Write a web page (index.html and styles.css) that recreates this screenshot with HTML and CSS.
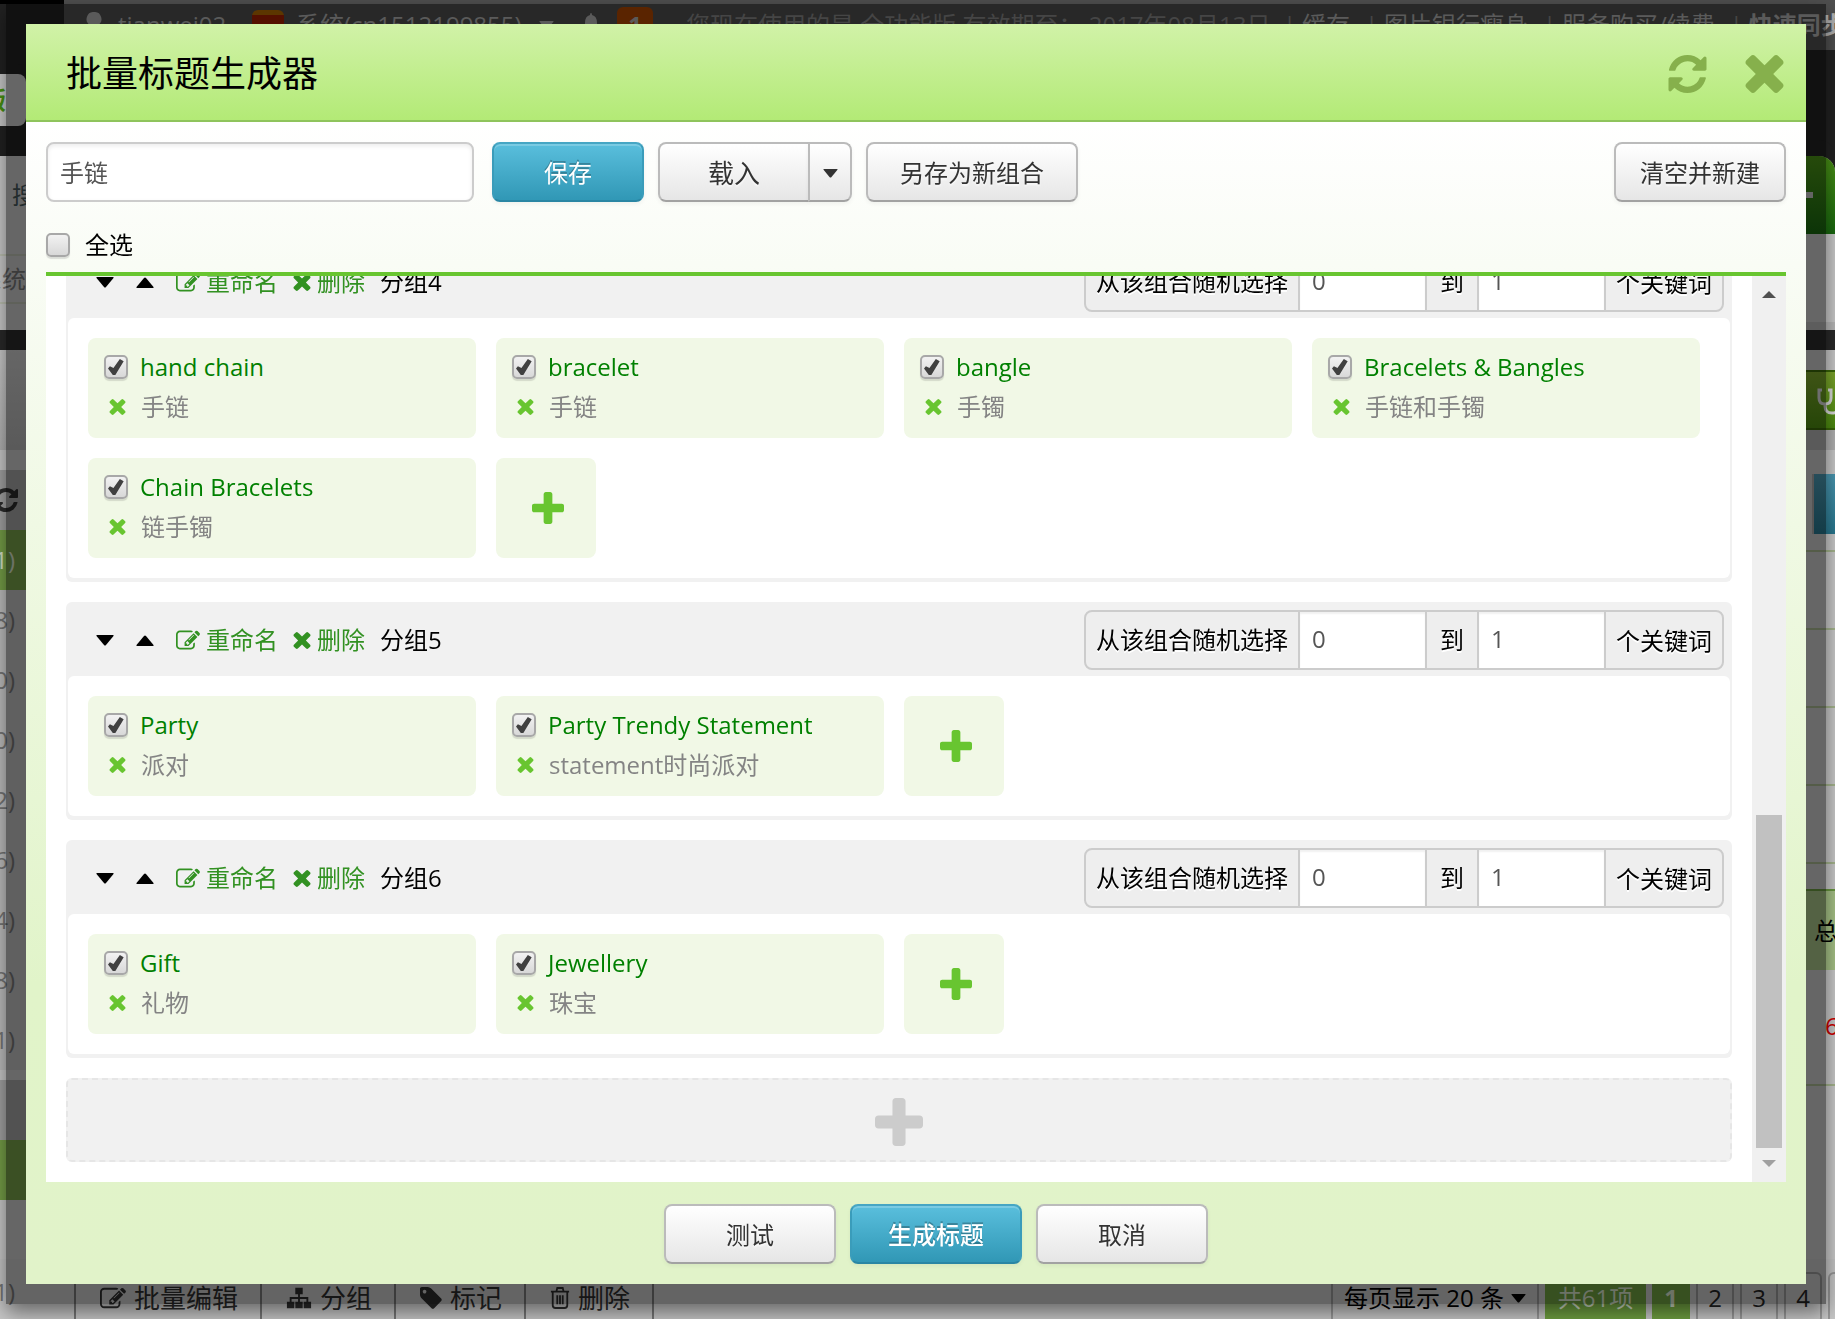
FILE: index.html
```html
<!DOCTYPE html>
<html lang="zh-CN">
<head>
<meta charset="utf-8">
<title>批量标题生成器</title>
<link rel="stylesheet" href="styles.css">
</head>
<body>
<svg class="sprite" aria-hidden="true">
  <symbol id="times" viewBox="110 238 1188 1188"><path transform="translate(0 1408) scale(1 -1)" d="M1298 214q0 -40 -28 -68l-136 -136q-28 -28 -68 -28t-68 28l-294 294l-294 -294q-28 -28 -68 -28t-68 28l-136 136q-28 28 -28 68t28 68l294 294l-294 294q-28 28 -28 68t28 68l136 136q28 28 68 28t68 -28l294 -294l294 294q28 28 68 28t68 -28l136 -136q28 -28 28 -68t-28 -68l-294 -294l294 -294q28 -28 28 -68z"/></symbol>
  <symbol id="refresh" viewBox="0 0 1536 1536"><path transform="translate(0 1408) scale(1 -1)" d="M1511 480q0 -5 -1 -7q-64 -268 -268 -434.500t-478 -166.500q-146 0 -282.500 55t-243.500 157l-129 -129q-19 -19 -45 -19t-45 19t-19 45v448q0 26 19 45t45 19h448q26 0 45 -19t19 -45t-19 -45l-137 -137q71 -66 161 -102t187 -36q134 0 250 65t186 179q11 17 53 117q8 23 30 23h192q13 0 22.500 -9.500t9.500 -22.500zM1536 1280v-448q0 -26 -19 -45t-45 -19h-448q-26 0 -45 19t-19 45t19 45l138 138q-148 137 -349 137q-134 0 -250 -65t-186 -179q-11 -17 -53 -117q-8 -23 -30 -23h-199q-13 0 -22.500 9.500t-9.500 22.500v7q65 268 270 434.500t480 166.500q146 0 284 -55.500t245 -156.500l130 129q19 19 45 19t45 -19t19 -45z"/></symbol>
  <symbol id="plus" viewBox="0 0 1408 1408"><path transform="translate(0 1408) scale(1 -1)" d="M1408 800v-192q0 -40 -28 -68t-68 -28h-416v-416q0 -40 -28 -68t-68 -28h-192q-40 0 -68 28t-28 68v416h-416q-40 0 -68 28t-28 68v192q0 40 28 68t68 28h416v416q0 40 28 68t68 28h192q40 0 68 -28t28 -68v-416h416q40 0 68 -28t28 -68z"/></symbol>
  <symbol id="edit" viewBox="0 0 1792 1408"><path transform="translate(0 1408) scale(1 -1)" d="M888 352l116 116l-152 152l-116 -116v-56h96v-96h56zM1328 1072q-16 16 -33 -1l-350 -350q-17 -17 -1 -33t33 1l350 350q17 17 1 33zM1408 478v-190q0 -119 -84.500 -203.500t-203.500 -84.500h-832q-119 0 -203.500 84.500t-84.500 203.500v832q0 119 84.500 203.500t203.500 84.500h832q63 0 117 -25q15 -7 18 -23q3 -17 -9 -29l-49 -49q-14 -14 -32 -8q-23 6 -45 6h-832q-66 0 -113 -47t-47 -113v-832q0 -66 47 -113t113 -47h832q66 0 113 47t47 113v126q0 13 9 22l64 64q15 15 35 7t20 -29zM1312 1216l288 -288l-672 -672h-288v288zM1756 1084l-92 -92l-288 288l92 92q28 28 68 28t68 -28l152 -152q28 -28 28 -68t-28 -68z"/></symbol>
  <symbol id="tag" viewBox="0 0 1536 1536"><path transform="translate(0 1408) scale(1 -1)" d="M448 1088q0 53 -37.500 90.500t-90.500 37.500t-90.500 -37.500t-37.500 -90.500t37.500 -90.500t90.500 -37.500t90.500 37.500t37.500 90.500zM1515 512q0 -53 -37 -90l-491 -492q-39 -37 -91 -37q-53 0 -90 37l-715 716q-38 37 -64.500 101t-26.500 117v416q0 52 38 90t90 38h416q53 0 117 -26.500t102 -64.500l715 -714q37 -39 37 -91z"/></symbol>
  <symbol id="sitemap" viewBox="0 0 28 24"><path d="M10 1h8v7h-3v3h9v5h3v7h-8v-7h3v-3h-7v3h3v7h-8v-7h3v-3H6v3h3v7H1v-7h3v-5h9V8h-3z"/></symbol>
  <symbol id="trash" viewBox="0 0 22 24"><path fill="none" stroke="currentColor" stroke-width="2" d="M1 5h20M7 5l1-4h6l1 4M3 5v15q0 3 3 3h10q3 0 3-3V5M8 9v10M11 9v10M14 9v10"/></symbol>
  <symbol id="down" viewBox="0 0 18 11"><path d="M1 0h16q1 0 .5 1L10 10q-1 1-2 0L.5 1Q0 0 1 0z"/></symbol>
  <symbol id="up" viewBox="0 0 18 11"><path d="M1 11h16q1 0 .5-1L10 1Q9 0 8 1L.5 10q-.5 1 .5 1z"/></symbol>
  <symbol id="user" viewBox="0 0 18 26"><path d="M9 0a7 7 0 0 1 4 13l1 3q4 1 4 5v3H0v-3q0-4 4-5l1-3A7 7 0 0 1 9 0z"/></symbol>
  <symbol id="bell" viewBox="0 0 18 24"><path d="M9 0q1 0 1 2 5 1 5 8 0 7 3 9H0q3-2 3-9 0-7 5-8 0-2 1-2zM7 20h4q0 3-2 3t-2-3z"/></symbol>
  <symbol id="steth" viewBox="0 0 30 30"><path fill="none" stroke="currentColor" stroke-width="3" d="M6 4H3v8q0 6 6 6t6-6V4h-3M9 18v2q0 7 7 7t7-7v-7"/></symbol>
</svg>

<div class="page">
  <header class="topbar">
    <div class="topbar-brand"></div>
    <nav class="topbar-nav">
      <svg class="ico-user"><use href="#user"/></svg>
      <span class="nav-user">tianwei02</span>
      <span class="shop-logo"></span>
      <span class="nav-shop">系统(cn1512199855)</span>
      <svg class="ico-caret nav-caret"><use href="#down"/></svg>
      <svg class="ico-bell"><use href="#bell"/></svg>
      <b class="nav-badge">1</b>
      <span class="nav-notice">您现在使用的是 全功能版 有效期至： 2017年08月13日</span>
      <span class="nav-links"><i>|</i><a href="#">缓存</a><i>|</i><a href="#">图片银行瘦身</a><i>|</i><a href="#">服务购买/续费</a><i>|</i><b>快速同步</b></span>
    </nav>
  </header>
  <div class="middle">
    <aside class="left">
      <div class="l-dark-a"></div>
      <div class="l-tab">版</div>
      <div class="l-dark-b"></div>
      <div class="l-search">搜</div>
      <div class="l-system">系统</div>
      <div class="l-gap"></div>
      <div class="l-dark-c"></div>
      <div class="l-panel"></div>
      <div class="l-refresh"><svg><use href="#refresh"/></svg></div>
      <div class="l-row on">1)</div>
      <div class="l-row">8)</div>
      <div class="l-row">0)</div>
      <div class="l-row">0)</div>
      <div class="l-row">2)</div>
      <div class="l-row">6)</div>
      <div class="l-row">4)</div>
      <div class="l-row">8)</div>
      <div class="l-row">1)</div>
      <div class="l-row head"></div>
      <div class="l-row on"></div>
    </aside>
    <aside class="right">
      <div class="r-dark"></div>
      <div class="r-green"><span></span></div>
      <div class="r-space"></div>
      <div class="r-band"></div>
      <div class="r-check"><svg><use href="#steth"/></svg></div>
      <div class="r-strip"></div>
      <div class="r-blue"></div>
      <div class="r-rule"></div>
      <div class="r-line"></div>
      <div class="r-line"></div>
      <div class="r-line"></div>
      <div class="r-line"></div>
      <div class="r-total">总</div>
      <div class="r-count">6</div>
    </aside>
  </div>
  <footer class="bottombar">
    <span class="left-count">1)</span>
    <div class="tools">
      <a href="#"><svg class="w26"><use href="#edit"/></svg>批量编辑</a>
      <a href="#"><svg class="w26"><use href="#sitemap"/></svg>分组</a>
      <a href="#"><svg class="w22"><use href="#tag"/></svg>标记</a>
      <a href="#"><svg class="w20"><use href="#trash"/></svg>删除</a>
    </div>
    <div class="pager">
      <button class="pg size">每页显示 20 条<svg class="ico-caret"><use href="#down"/></svg></button>
      <span class="pg total">共61项</span>
      <button class="pg current">1</button>
      <button class="pg">2</button>
      <button class="pg">3</button>
      <button class="pg">4</button>
      <button class="pg" aria-label="下一页"></button>
    </div>
  </footer>
</div>

<section class="modal" role="dialog" aria-labelledby="title">
  <header class="modal-head">
    <h1 id="title">批量标题生成器</h1>
    <button class="icon-btn" aria-label="刷新"><svg><use href="#refresh"/></svg></button>
    <button class="icon-btn" aria-label="关闭"><svg><use href="#times"/></svg></button>
  </header>
  <div class="modal-body">
    <div class="toolbar">
      <input class="name" type="text" value="手链" aria-label="组合名称">
      <button class="btn primary save">保存</button>
      <div class="split">
        <button class="btn load">载入</button><button class="btn drop" aria-label="更多"><svg class="ico-caret"><use href="#down"/></svg></button>
      </div>
      <button class="btn saveas">另存为新组合</button>
      <button class="btn wide clear">清空并新建</button>
    </div>
    <div class="select-all"><label><input class="tick" type="checkbox">全选</label></div>
    <div class="scroller">
      <div class="list">
        <section class="group">
          <header class="group-head">
            <button class="move" aria-label="下移"><svg><use href="#down"/></svg></button>
            <button class="move" aria-label="上移"><svg><use href="#up"/></svg></button>
            <a class="rename" href="#"><svg><use href="#edit"/></svg>重命名</a>
            <a class="remove" href="#"><svg><use href="#times"/></svg>删除</a>
            <span>分组4</span>
            <div class="range"><label for="a4">从该组合随机选择</label><input id="a4" type="text" value="0"><label for="b4">到</label><input id="b4" type="text" value="1"><span>个关键词</span></div>
          </header>
          <div class="cards">
            <div class="card"><label><input class="tick" type="checkbox" checked>hand chain</label><p><button aria-label="删除"><svg><use href="#times"/></svg></button>手链</p></div>
            <div class="card"><label><input class="tick" type="checkbox" checked>bracelet</label><p><button aria-label="删除"><svg><use href="#times"/></svg></button>手链</p></div>
            <div class="card"><label><input class="tick" type="checkbox" checked>bangle</label><p><button aria-label="删除"><svg><use href="#times"/></svg></button>手镯</p></div>
            <div class="card"><label><input class="tick" type="checkbox" checked>Bracelets &amp; Bangles</label><p><button aria-label="删除"><svg><use href="#times"/></svg></button>手链和手镯</p></div>
            <div class="card"><label><input class="tick" type="checkbox" checked>Chain Bracelets</label><p><button aria-label="删除"><svg><use href="#times"/></svg></button>链手镯</p></div>
            <button class="add" aria-label="添加"><svg><use href="#plus"/></svg></button>
          </div>
        </section>
        <section class="group">
          <header class="group-head">
            <button class="move" aria-label="下移"><svg><use href="#down"/></svg></button>
            <button class="move" aria-label="上移"><svg><use href="#up"/></svg></button>
            <a class="rename" href="#"><svg><use href="#edit"/></svg>重命名</a>
            <a class="remove" href="#"><svg><use href="#times"/></svg>删除</a>
            <span>分组5</span>
            <div class="range"><label for="a5">从该组合随机选择</label><input id="a5" type="text" value="0"><label for="b5">到</label><input id="b5" type="text" value="1"><span>个关键词</span></div>
          </header>
          <div class="cards">
            <div class="card"><label><input class="tick" type="checkbox" checked>Party</label><p><button aria-label="删除"><svg><use href="#times"/></svg></button>派对</p></div>
            <div class="card"><label><input class="tick" type="checkbox" checked>Party Trendy Statement</label><p><button aria-label="删除"><svg><use href="#times"/></svg></button>statement时尚派对</p></div>
            <button class="add" aria-label="添加"><svg><use href="#plus"/></svg></button>
          </div>
        </section>
        <section class="group">
          <header class="group-head">
            <button class="move" aria-label="下移"><svg><use href="#down"/></svg></button>
            <button class="move" aria-label="上移"><svg><use href="#up"/></svg></button>
            <a class="rename" href="#"><svg><use href="#edit"/></svg>重命名</a>
            <a class="remove" href="#"><svg><use href="#times"/></svg>删除</a>
            <span>分组6</span>
            <div class="range"><label for="a6">从该组合随机选择</label><input id="a6" type="text" value="0"><label for="b6">到</label><input id="b6" type="text" value="1"><span>个关键词</span></div>
          </header>
          <div class="cards">
            <div class="card"><label><input class="tick" type="checkbox" checked>Gift</label><p><button aria-label="删除"><svg><use href="#times"/></svg></button>礼物</p></div>
            <div class="card"><label><input class="tick" type="checkbox" checked>Jewellery</label><p><button aria-label="删除"><svg><use href="#times"/></svg></button>珠宝</p></div>
            <button class="add" aria-label="添加"><svg><use href="#plus"/></svg></button>
          </div>
        </section>
        <button class="add-group" aria-label="添加分组"><svg><use href="#plus"/></svg></button>
      </div>
      <div class="scrollbar"><i class="arrow-up"></i><i class="thumb"></i><i class="arrow-down"></i></div>
    </div>
  </div>
  <footer class="modal-foot">
    <button class="btn wide">测试</button>
    <button class="btn primary wide strong">生成标题</button>
    <button class="btn wide">取消</button>
  </footer>
</section>
</body>
</html>
```
FILE: styles.css
```css
* { box-sizing: border-box; }
body {
  margin: 0;
  height: 100vh;
  overflow: hidden;
  font: 24px/40px "Open Sans", "Noto Sans CJK SC", sans-serif;
  color: #000;
  background: #ccc;
}
button, input { font: inherit; margin: 0; }
button { padding: 0; border: 0; background: none; color: inherit; display: inline-flex; align-items: center; justify-content: center; white-space: nowrap; }
a { color: inherit; text-decoration: none; }
svg { fill: currentColor; flex: none; display: block; }
.sprite { position: absolute; width: 0; height: 0; }
.ico-caret { width: 15px; height: 9px; }

/* page under the dialog */
.page { height: 100vh; display: flex; flex-direction: column; overflow: hidden; }
.topbar { display: flex; height: 50px; background: #505050; white-space: nowrap; }
.topbar-brand { flex: none; width: 64px; background: linear-gradient(#000 4px, #222 4px); }
.topbar-nav { display: flex; align-items: center; padding-left: 21px; color: #b4b4b4; }
.topbar-nav > * { flex: none; }
.ico-user { width: 18px; height: 26px; }
.nav-user { width: 149px; padding-left: 15px; }
.shop-logo { width: 32px; height: 30px; border-radius: 6px; background: linear-gradient(#b86c00 5px, #a82000 5px); }
.nav-shop { width: 255px; padding-left: 12px; }
.nav-caret { margin-right: 28px; }
.ico-bell { width: 18px; height: 24px; margin-right: 17px; }
.nav-badge { width: 36px; height: 36px; line-height: 36px; border-radius: 6px; background: #b44800; text-align: center; }
.nav-notice { width: 630px; padding-left: 33px; color: #8a8a8a; }
.nav-links { display: flex; }
.nav-links i { width: 19px; color: #8a8a8a; font-style: normal; }
.nav-links a { padding-right: 15px; }
.middle { flex: 1; display: flex; justify-content: space-between; min-height: 0; }
.left { width: 26px; overflow: hidden; background: #ccc; color: #777; white-space: nowrap; }
.left > div { display: flex; align-items: center; justify-content: flex-end; }
.left > .l-dark-a { height: 24px; background: #222; }
.left > .l-tab { height: 52px; padding-right: 20px; color: #4a9410; font-weight: bold; border-radius: 0 8px 8px 0; box-shadow: 0 0 0 10px #222; }
.left > .l-dark-b { height: 30px; background: #222; }
.left > .l-search { height: 100px; padding-bottom: 20px; justify-content: flex-start; padding-left: 12px; color: #46585a; border-bottom: 2px solid #bfc3b4; }
.left > .l-system { height: 48px; border-bottom: 2px solid #bfc3b4; }
.left > .l-gap { height: 26px; }
.left > .l-dark-c { height: 20px; background: #2a2a2a; }
.left > .l-panel { height: 120px; background: linear-gradient(#ccc, #b4b4b4 100px, #ccc 100px); }
.left > .l-refresh { height: 60px; background: #a4a4a4; color: #2c2c2c; padding-right: 8px; }
.l-refresh svg { width: 24px; height: 24px; }
.left > .l-row { height: 60px; padding-right: 11px; background: #c0c0c0; }
.left > .l-row.on { background: #76a048; color: #d8e4cc; }
.left > .l-row.head { margin-top: 10px; background: #a4a4a4; }
.right { width: 29px; overflow: hidden; background: #ccc; }
.r-dark { height: 106px; background: #222; }
.r-green { height: 78px; display: flex; align-items: center; border-radius: 0 16px 0 0; background: linear-gradient(#4c9416, #18690f); box-shadow: 0 -16px 0 #222; }
.r-green span { width: 7px; height: 6px; background: #c8c8c8; }
.r-space { height: 96px; border-bottom: 8px solid #bbb; }
.r-band { height: 40px; background: linear-gradient(#2a2a2a 20px, #ccc 20px); }
.r-check { height: 60px; padding: 14px 0 0 10px; color: #ddd; border: solid #3a6808; border-width: 2px 0; background: linear-gradient(#7ea82c, #4c8c10); }
.r-check svg { width: 30px; height: 30px; }
.r-strip { height: 44px; background: linear-gradient(#b4b4b4 20px, #ccc 20px); }
.r-blue { height: 60px; margin-left: 6px; border-left: 2px solid #aaa; background: linear-gradient(#4c9ab4, #287890); }
.r-rule { height: 18px; border-bottom: 2px solid #a8b890; }
.r-line { height: 78px; border-bottom: 2px solid #a8b890; }
.r-total { height: 81px; margin-top: 25px; padding: 20px 0 0 8px; border-top: 2px solid #6a9a40; background: #a8c488; }
.r-count { height: 116px; padding: 36px 0 0 19px; color: #d00000; border-bottom: 2px solid #a8b890; }
.bottombar { flex: none; height: 60px; padding-top: 13px; display: flex; background: #c8c8c8; color: #2c2c2c; white-space: nowrap; overflow: hidden; }
.left-count { flex: none; width: 74px; display: flex; flex-direction: row-reverse; align-items: center; height: 40px; padding-right: 59px; color: #777; }
.tools { display: flex; font-size: 26px; }
.tools a { display: flex; align-items: center; gap: 8px; height: 52px; padding: 0 22px 0 24px; border-left: 2px solid #777; }
.tools a:last-child { border-right: 2px solid #777; }
.w26 { width: 26px; height: 24px; }
.w22 { width: 22px; height: 24px; }
.w20 { width: 20px; height: 24px; }
.pager { display: flex; gap: 6px; width: 504px; margin-left: auto; color: #222; }
.pg { flex: none; min-width: 38px; height: 52px; border: 2px solid #999; border-radius: 6px; display: flex; align-items: center; justify-content: center; gap: 7px; }
.pg.size { width: 208px; color: #000; }
.pg.total, .pg.current { border: 0; border-radius: 0; background: #6fa040; color: #d8e4cc; }
.pg.total { width: 101px; }
.pg.current { font-weight: bold; }

/* dialog */
.modal {
  position: fixed;
  inset: 4px 9px 15px 6px;
  display: flex;
  flex-direction: column;
  border: 20px solid rgba(0, 0, 0, .5);
  background: linear-gradient(#fff 98px, #f9fcf5 240px, #f0f9e4 500px, #e1f4c9 960px, #e1f3c9) padding-box;
  box-shadow: 0 8px 20px rgba(0, 0, 0, .5);
}
.modal-head { display: flex; align-items: center; height: 98px; padding: 4px 22px 0 40px; border-bottom: 2px solid #8fc45c; background: linear-gradient(#d1f2a8, #b3ea76); }
h1 { flex: 1; margin: 0; font-size: 36px; line-height: 52px; font-weight: 400; }
.icon-btn { width: 39px; height: 38px; margin-left: 38px; color: #86b04c; }
.icon-btn svg { width: 39px; height: 38px; }
.modal-body { flex: 1; min-height: 0; display: flex; flex-direction: column; padding: 20px 20px 0; }
.toolbar { display: flex; }
.name { width: 428px; height: 60px; padding: 0 12px 2px; border: 2px solid #ccc; border-radius: 8px; background: #fff; color: #555; box-shadow: inset 0 2px 4px rgba(0, 0, 0, .08); }
.btn { height: 60px; padding-top: 2px; border: 2px solid #bbb; border-bottom-color: #a2a2a2; border-radius: 8px; background: linear-gradient(#fff, #e6e6e6); color: #333; text-shadow: 0 2px 2px rgba(255, 255, 255, .75); box-shadow: 0 2px 4px rgba(0, 0, 0, .05); }
.btn.primary { color: #fff; border-color: #46a6c4 #3a9cba #2a86a4; background: linear-gradient(#5bc0de, #2f96b4) border-box; text-shadow: 0 -2px 0 rgba(0, 0, 0, .25); box-shadow: inset 0 2px 0 rgba(255, 255, 255, .2), 0 2px 4px rgba(0, 0, 0, .05); }
.btn.strong { font-weight: 500; }
.save { width: 152px; margin-left: 18px; }
.split { display: flex; margin: 0 14px; }
.load { width: 152px; font-size: 26px; border-radius: 8px 0 0 8px; }
.drop { width: 44px; margin-left: -2px; border-radius: 0 8px 8px 0; }
.saveas { width: 212px; }
.wide { width: 172px; }
.clear { margin-left: auto; }
.select-all { padding: 23px 0 7px; border-bottom: 4px solid #68c530; }
label { display: flex; align-items: center; }
.select-all label { width: 120px; }
.tick { appearance: none; flex: none; width: 24px; height: 24px; margin-right: 15px; border: 2px solid #a8a8a8; border-radius: 5px; background: linear-gradient(#f2f2f2, #d8d8d8); box-shadow: 0 2px 1px rgba(0, 0, 0, .12); }
.card .tick { margin-right: 12px; }
.tick:checked { padding: 2px; }
.tick:checked::after { content: ""; display: block; width: 16px; height: 16px; background: #404040; clip-path: polygon(0 60%, 12% 45%, 34% 56%, 74% 0, 98% 14%, 46% 100%, 30% 100%); }
.scroller { flex: 1; min-height: 0; display: flex; background: #fff; }
.list { flex: 1; min-width: 0; display: flex; flex-direction: column; justify-content: flex-end; gap: 20px; padding: 0 20px 20px; overflow: hidden; }
.group { flex: none; padding: 0 2px 4px; border-radius: 6px; background: #f1f1f1; }
.group-head { display: flex; align-items: center; height: 74px; padding: 2px 6px 0 28px; white-space: nowrap; }
.move { width: 18px; height: 11px; margin-right: 22px; }
.move svg { width: 18px; height: 11px; }
.rename, .remove { display: flex; align-items: center; gap: 6px; margin-right: 15px; color: #329122; }
.rename svg { width: 24px; height: 20px; }
.remove svg { width: 18px; height: 17px; }
.range { display: flex; margin-left: auto; width: 640px; height: 60px; border: 2px solid #ccc; border-radius: 8px; overflow: hidden; background: #eee; text-shadow: 0 2px 0 #fff; }
.range label, .range span { padding: 0 10px; line-height: 58px; }
.range label + input { flex: 1; width: 0; min-width: 0; padding: 0 12px 2px; border: solid #ccc; border-width: 0 2px; background: #fff; color: #555; box-shadow: inset 0 2px 2px rgba(0, 0, 0, .06); }
.range input + label { padding: 0 13px; }
.cards { display: flex; flex-wrap: wrap; gap: 20px; padding: 20px; border-radius: 6px; background: #fff; }
.card { width: 388px; height: 100px; padding: 9px 16px 0; border-radius: 8px; background: #f1f8e6; }
.card label { color: #008000; }
.card p { margin: 0; display: flex; align-items: center; color: #848484; }
.card p button { width: 17px; height: 16px; margin: 0 15px 0 5px; color: #68c530; }
.card p svg { width: 17px; height: 16px; }
.add { width: 100px; height: 100px; padding-left: 3px; border-radius: 8px; background: #f1f8e6; color: #68c530; }
.add svg { width: 32px; height: 32px; }
.add-group { flex: none; height: 84px; padding-top: 4px; border: 2px dashed #e6e6e6; border-radius: 6px; background: #f1f1f1; color: #ccc; }
.add-group svg { width: 48px; height: 48px; }
.scrollbar { width: 34px; padding: 15px 0; display: flex; flex-direction: column; align-items: center; justify-content: space-between; background: #f0f0f0; }
.arrow-up { border: 7px solid transparent; border-top: 0; border-bottom-color: #505050; }
.thumb { width: 26px; height: 38%; margin: auto 0 12px; background: #c1c1c1; }
.arrow-down { border: 7px solid transparent; border-bottom: 0; border-top-color: #a0a0a0; }
.modal-foot { display: flex; justify-content: center; gap: 14px; padding: 22px 0 20px 40px; }
```
